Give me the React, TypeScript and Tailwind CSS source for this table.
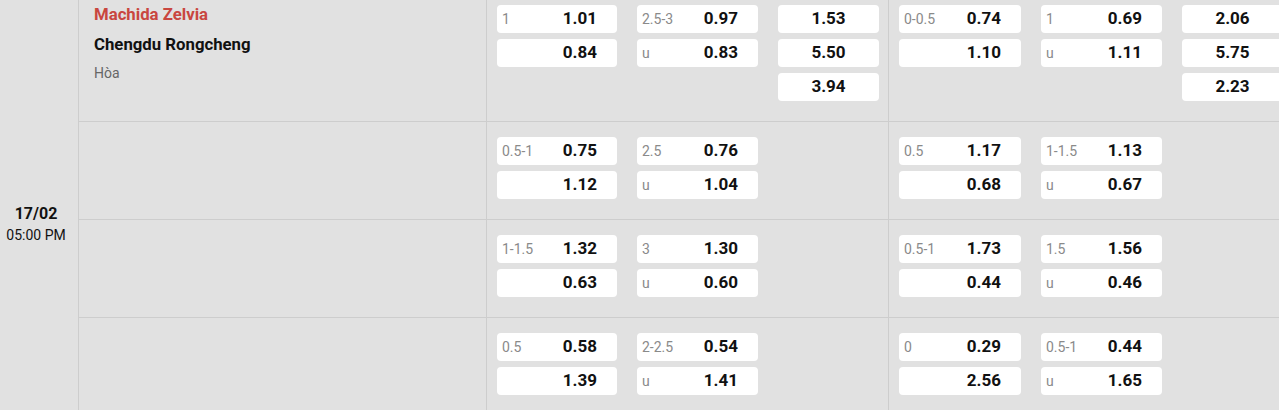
import type { ReactNode } from "react";

type Cell = { label?: string; value: string };

type Market = {
  hdp: Cell[];
  ou: Cell[];
  x12?: string[];
};

type OddsRow = {
  full: Market;
  half: Market;
};

const FONT = { fontFamily: "Roboto, 'Noto Sans', sans-serif" };

const ROWS: OddsRow[] = [
  {
    full: {
      hdp: [{ label: "1", value: "1.01" }, { value: "0.84" }],
      ou: [{ label: "2.5-3", value: "0.97" }, { label: "u", value: "0.83" }],
      x12: ["1.53", "5.50", "3.94"],
    },
    half: {
      hdp: [{ label: "0-0.5", value: "0.74" }, { value: "1.10" }],
      ou: [{ label: "1", value: "0.69" }, { label: "u", value: "1.11" }],
      x12: ["2.06", "5.75", "2.23"],
    },
  },
  {
    full: {
      hdp: [{ label: "0.5-1", value: "0.75" }, { value: "1.12" }],
      ou: [{ label: "2.5", value: "0.76" }, { label: "u", value: "1.04" }],
    },
    half: {
      hdp: [{ label: "0.5", value: "1.17" }, { value: "0.68" }],
      ou: [{ label: "1-1.5", value: "1.13" }, { label: "u", value: "0.67" }],
    },
  },
  {
    full: {
      hdp: [{ label: "1-1.5", value: "1.32" }, { value: "0.63" }],
      ou: [{ label: "3", value: "1.30" }, { label: "u", value: "0.60" }],
    },
    half: {
      hdp: [{ label: "0.5-1", value: "1.73" }, { value: "0.44" }],
      ou: [{ label: "1.5", value: "1.56" }, { label: "u", value: "0.46" }],
    },
  },
  {
    full: {
      hdp: [{ label: "0.5", value: "0.58" }, { value: "1.39" }],
      ou: [{ label: "2-2.5", value: "0.54" }, { label: "u", value: "1.41" }],
    },
    half: {
      hdp: [{ label: "0", value: "0.29" }, { value: "2.56" }],
      ou: [{ label: "0.5-1", value: "0.44" }, { label: "u", value: "1.65" }],
    },
  },
];

function OddBox({ cell, width }: { cell: Cell; width: string }) {
  return (
    <div className={`flex h-[28px] ${width} items-center justify-between rounded-[4px] bg-white pl-[5px] pr-5`}>
      <span className="text-[14px] text-[#8a8a8a]">{cell.label ?? ""}</span>
      <span className="text-[17px] font-bold text-[#111]">{cell.value}</span>
    </div>
  );
}

function Stack({ children }: { children: ReactNode }) {
  return <div className="flex flex-col gap-[6px]">{children}</div>;
}

function MarketBlock({ market, last }: { market: Market; last?: boolean }) {
  // first-half block has a slightly wider handicap column
  const hdpWidth = last ? "w-[122px]" : "w-[120px]";
  return (
    <div
      className={`flex shrink-0 gap-5 pl-[10px] pr-[9px] pt-[15px] pb-[20px] ${
        last ? "" : "w-[402px] border-r border-[#cdcdcd]"
      }`}
    >
      <Stack>
        {market.hdp.map((c, i) => (
          <OddBox key={i} cell={c} width={hdpWidth} />
        ))}
      </Stack>
      <Stack>
        {market.ou.map((c, i) => (
          <OddBox key={i} cell={c} width="w-[121px]" />
        ))}
      </Stack>
      {market.x12 && (
        <Stack>
          {market.x12.map((v) => (
            <div
              key={v}
              className="flex h-[28px] w-[101px] items-center justify-center rounded-[4px] bg-white text-[17px] font-bold text-[#111]"
            >
              {v}
            </div>
          ))}
        </Stack>
      )}
    </div>
  );
}

export default function App() {
  return (
    <div className="h-[410px] w-[1279px] overflow-hidden bg-[#e1e1e1]" style={FONT}>
      <div className="-mt-[10px] flex">
        <div className="w-[79px] shrink-0 border-r border-[#cdcdcd] pr-[6px] pt-[213px] text-center text-[#111]">
          <div className="text-[16px] font-bold leading-[22px]">17/02</div>
          <div className="text-[14px] leading-[20px]">05:00 PM</div>
        </div>
        <div className="flex flex-col">
          {ROWS.map((row, i) => (
            <div key={i} className="flex border-b border-[#cdcdcd]">
              <div className="w-[408px] shrink-0 border-r border-[#cdcdcd] pl-[15px] pt-[9px] leading-[30px]">
                {i === 0 && (
                  <>
                    <div className="text-[16.75px] font-bold text-[#c9463f]">Machida Zelvia</div>
                    <div className="text-[16.75px] font-bold text-[#111]">Chengdu Rongcheng</div>
                    <div className="text-[14px] leading-[28px] text-[#666]">Hòa</div>
                  </>
                )}
              </div>
              <MarketBlock market={row.full} />
              <MarketBlock market={row.half} last />
            </div>
          ))}
        </div>
      </div>
    </div>
  );
}
